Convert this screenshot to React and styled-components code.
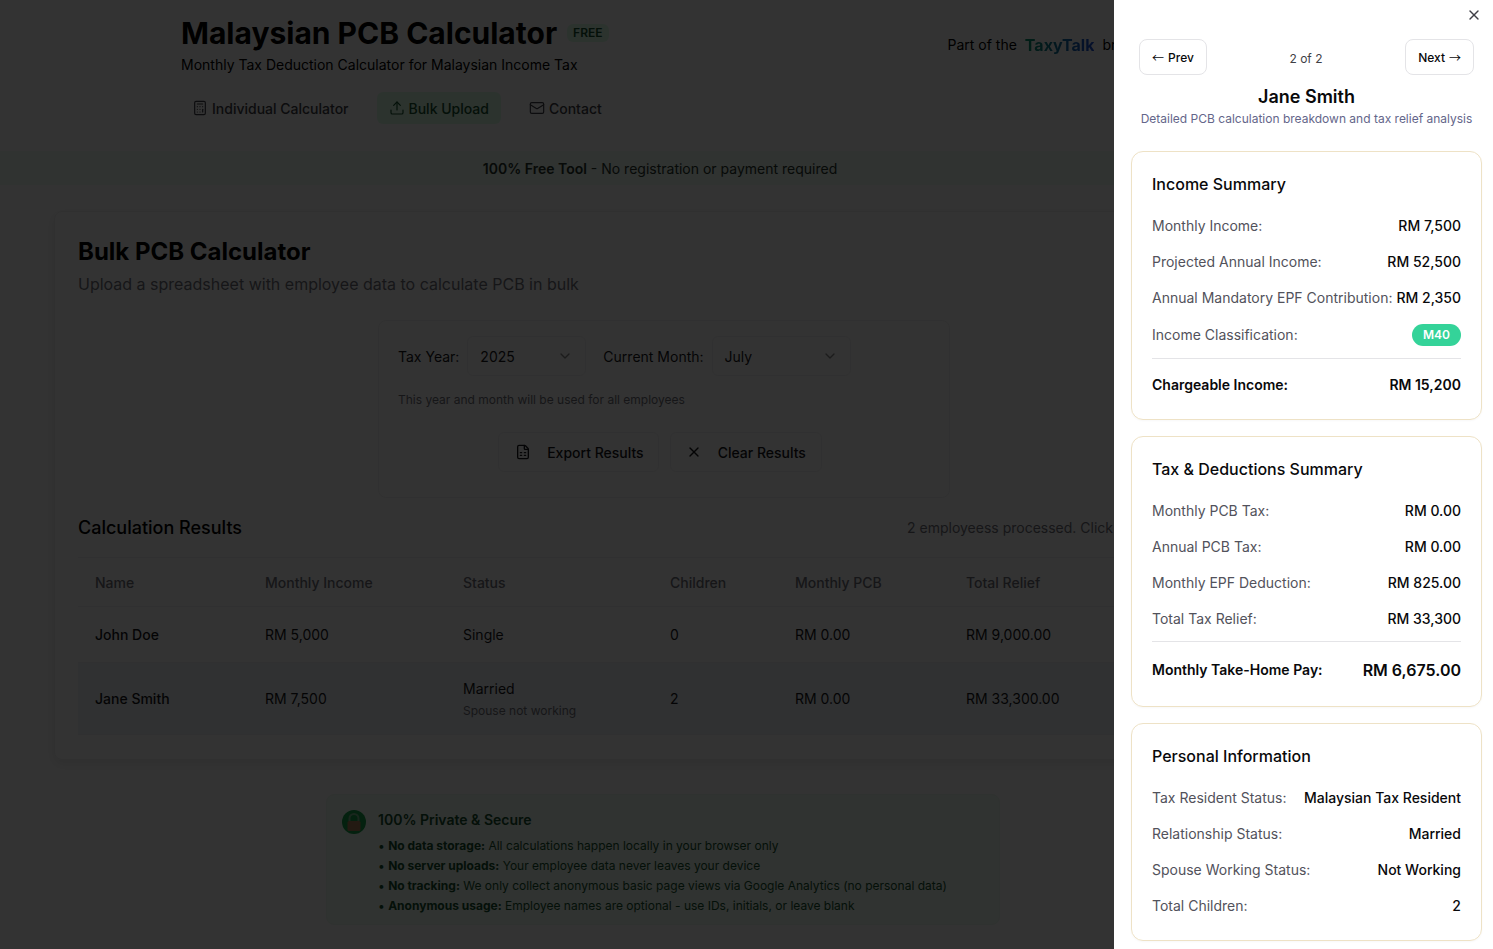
import React from "react";
import styled, { createGlobalStyle } from "styled-components";
import { Calculator, Upload, Mail, ChevronDown, FileSpreadsheet, X } from "lucide-react";

const Global = createGlobalStyle`
  html, body { margin: 0; padding: 0; height: 100%; background: #fff; overflow: hidden; }
  body { font-family: Inter, "Liberation Sans", sans-serif; color: #09090b; }
  * { box-sizing: border-box; }
`;

const Page = styled.div`
  width: 1320px;
  height: 949px;
  overflow: hidden;
  background: #fff;
`;
const Header = styled.header`
  width: 958px;
  margin: 0 auto;
  padding-top: 15px;
`;
const HeaderTop = styled.div`
  display: flex;
  justify-content: space-between;
  align-items: flex-start;
`;
const TitleRow = styled.div`
  display: flex;
  align-items: center;
  gap: 10px;
`;
const Title = styled.h1`
  margin: 0;
  font-size: 30px;
  line-height: 36px;
  font-weight: 700;
  color: #000;
`;
const FreeBadge = styled.span`
  padding: 1px 6px;
  border-radius: 6px;
  font-size: 12px;
  line-height: 16px;
  font-weight: 600;
  color: #14532d;
  background: #dcfce7;
`;
const Subtitle = styled.p`
  margin: 4px 0 0;
  font-size: 14px;
  line-height: 20px;
  color: #000;
`;
const Brand = styled.div`
  display: flex;
  align-items: center;
  gap: 8px;
  margin: 18px -2px 0 0;
  font-size: 14px;
  line-height: 24px;
  color: #000;
`;
const BrandName = styled.span`
  font-size: 16px;
  font-weight: 700;
  background: linear-gradient(90deg, #059669, #1d4ed8);
  -webkit-background-clip: text;
  background-clip: text;
  color: transparent;
`;
const Nav = styled.nav`
  display: flex;
  gap: 16px;
  margin: 17px 0 0 -1px;
`;
const NavItem = styled.div`
  display: flex;
  align-items: center;
  gap: 4px;
  height: 32px;
  padding: 0 12px;
  border-radius: 6px;
  font-size: 14px;
  font-weight: 500;
  color: ${(p) => (p.$active ? "#14532d" : "#3f3f46")};
  background: ${(p) => (p.$active ? "#dcfce7" : "transparent")};
`;
const Banner = styled.div`
  margin-top: 27px;
  height: 34px;
  display: flex;
  align-items: center;
  justify-content: center;
  background: #eefcf2;
  font-size: 14px;
  color: #27352c;
  & > b { font-weight: 600; margin-right: 4px; }
`;
const Main = styled.main`
  padding: 26px 54px 0;
`;
const Card = styled.section`
  height: 549px;
  border: 1px solid #eeeef0;
  border-radius: 8px;
  box-shadow: 0 4px 12px rgba(0, 0, 0, 0.1);
  padding: 24px 23px;
`;
const CardTitle = styled.h2`
  margin: 0;
  font-size: 24px;
  line-height: 32px;
  font-weight: 700;
  color: #000;
`;
const CardSub = styled.p`
  margin: 4px 0 24px;
  font-size: 16px;
  line-height: 24px;
  color: #71717a;
`;
const UploadBox = styled.div`
  width: 572px;
  height: 178px;
  margin-left: 300px;
  border: 1px solid #f1f1f3;
  border-radius: 8px;
  padding: 15px 19px 0;
`;
const SelectRow = styled.div`
  display: flex;
  align-items: center;
  gap: 8px;
`;
const FieldLabel = styled.span`
  font-size: 14px;
  color: #18181b;
  margin-left: ${(p) => p.$offset || 0}px;
`;
const SelectBox = styled.div`
  width: ${(p) => p.$w}px;
  height: 40px;
  display: flex;
  align-items: center;
  justify-content: space-between;
  padding: 0 12px;
  border: 1px solid #f1f1f3;
  border-radius: 6px;
  font-size: 14px;
  color: #18181b;
  & svg { opacity: 0.5; }
`;
const Helper = styled.p`
  margin: 16px 0 0;
  font-size: 12px;
  line-height: 16px;
  color: #71717a;
`;
const Actions = styled.div`
  display: flex;
  justify-content: center;
  gap: 11px;
  margin: 24px 8px 0 0;
`;
const OutlineButton = styled.div`
  display: flex;
  align-items: center;
  gap: 16px;
  height: 40px;
  padding: ${(p) => (p.$wide ? "0 14px 0 16px" : "0 15px")};
  border: 1px solid #f1f1f3;
  border-radius: 6px;
  font-size: 14px;
  font-weight: 500;
  color: #18181b;
`;
const ResultsHead = styled.div`
  display: flex;
  justify-content: space-between;
  align-items: center;
  margin-top: 16px;
  padding-right: 129px;
`;
const ResultsTitle = styled.h3`
  margin: 0;
  font-size: 18px;
  line-height: 28px;
  font-weight: 500;
  color: #000;
`;
const ResultsNote = styled.span`
  margin-bottom: 2px;
  font-size: 14px;
  color: #71717a;
`;
const Table = styled.table`
  width: 1164px;
  margin-top: 15px;
  border-collapse: collapse;
  table-layout: fixed;
  font-size: 14px;
  border-top: 1px solid #f1f1f3;
`;
const Th = styled.th`
  width: ${(p) => p.$w}px;
  height: 49px;
  padding: 0 16px 0 17px;
  text-align: left;
  font-weight: 500;
  color: #71717a;
  border-bottom: 1px solid #f1f1f3;
`;
const Tr = styled.tr`
  background: ${(p) => (p.$selected ? "#f0f4f8" : "transparent")};
  border-bottom: 1px solid #f1f1f3;
`;
const Td = styled.td`
  height: ${(p) => (p.$tall ? 72 : 56)}px;
  padding: ${(p) => (p.$note ? "2px" : "0")} 16px 0 17px;
  font-weight: ${(p) => (p.$strong ? 500 : 400)};
  color: #18181b;
`;
const SpouseNote = styled.div`
  margin-top: 6px;
  font-size: 12px;
  line-height: 16px;
  color: #71717a;
`;
const Private = styled.aside`
  display: flex;
  gap: 12px;
  width: 674px;
  margin: 34px 0 0 272px;
  padding: 15px 15px 8px;
  background: #f0fcf3;
  border: 1px solid #ebfaee;
  border-radius: 8px;
`;
const PrivateTitle = styled.h4`
  margin: 0 0 6px;
  font-size: 14px;
  line-height: 20px;
  font-weight: 600;
  color: #14532d;
`;
const PrivateList = styled.ul`
  margin: 0;
  padding: 0;
  list-style: none;
  font-size: 12px;
  line-height: 20px;
  color: #14532d;
  & b { font-weight: 700; }
`;
const LockIcon = styled.svg`
  flex: none;
  width: 24px;
  height: 24px;
`;
const Overlay = styled.div`
  position: fixed;
  inset: 0;
  background: rgba(0, 0, 0, 0.8);
  backdrop-filter: blur(0.7px);
`;
const Drawer = styled.div`
  position: fixed;
  top: 0;
  right: 0;
  bottom: 0;
  width: 379px;
  padding: 39px 11px 0 17px;
  background: #fff;
  overflow: hidden;
`;
const CloseButton = styled.div`
  position: absolute;
  top: 7px;
  right: 11px;
  display: flex;
  color: #3f3f46;
`;
const Pager = styled.div`
  display: flex;
  justify-content: space-between;
  align-items: flex-start;
  padding: 0 8px;
`;
const PagerButton = styled.div`
  height: 36px;
  display: flex;
  align-items: center;
  gap: 4px;
  padding: 0 12px;
  border: 1px solid #e4e4e7;
  border-radius: 8px;
  font-size: 12px;
  font-weight: 500;
  color: #09090b;
`;
const Arrow = styled.span`
  font-family: "Noto Sans CJK JP", "Liberation Sans", sans-serif;
  font-weight: 400;
`;
const PagerCount = styled.span`
  margin-top: 12px;
  font-size: 12px;
  line-height: 16px;
  color: #3f3f46;
`;
const DrawerName = styled.h2`
  margin: 8px 0 0;
  text-align: center;
  font-size: 18px;
  line-height: 28px;
  font-weight: 600;
  color: #09090b;
`;
const DrawerSub = styled.p`
  margin: 0 0 24px;
  text-align: center;
  font-size: 12px;
  line-height: 16px;
  color: #64668a;
`;
const InfoCard = styled.div`
  margin-bottom: 16px;
  padding: 20px 20px 24px;
  border: 1px solid #eee2c6;
  border-radius: 12px;
  box-shadow: 0 1px 2px rgba(0, 0, 0, 0.03);
`;
const InfoTitle = styled.h3`
  margin: 0 0 20px;
  font-size: 16px;
  line-height: 24px;
  font-weight: 500;
  color: #09090b;
`;
const InfoRow = styled.div`
  display: flex;
  justify-content: space-between;
  align-items: center;
  font-size: 14px;
  line-height: 20px;
  & + & { margin-top: 16px; }
`;
const InfoLabel = styled.span`
  color: #52525b;
`;
const InfoValue = styled.span`
  font-weight: 500;
  color: #09090b;
`;
const TotalRow = styled.div`
  display: flex;
  justify-content: space-between;
  align-items: center;
  margin-top: 12px;
  padding-top: 16px;
  border-top: 1px solid #e4e4e7;
  font-size: 14px;
  line-height: 20px;
  font-weight: 600;
  color: #09090b;
`;
const BigValue = styled.span`
  font-size: 16px;
  line-height: 24px;
  font-weight: 600;
`;
const ClassBadge = styled.span`
  height: 22px;
  padding: 0 11px;
  display: flex;
  align-items: center;
  border-radius: 11px;
  background: #34d399;
  color: #fff;
  font-size: 12px;
  font-weight: 600;
`;

const Row = ({ label, value }) => (
  <InfoRow>
    <InfoLabel>{label}</InfoLabel>
    <InfoValue>{value}</InfoValue>
  </InfoRow>
);

export default function App() {
  return (
    <>
      <Global />
      <Page>
        <Header>
          <HeaderTop>
            <div>
              <TitleRow>
                <Title>Malaysian PCB Calculator</Title>
                <FreeBadge>FREE</FreeBadge>
              </TitleRow>
              <Subtitle>Monthly Tax Deduction Calculator for Malaysian Income Tax</Subtitle>
            </div>
            <Brand>
              <span>Part of the</span>
              <BrandName>TaxyTalk</BrandName>
              <span>brand</span>
            </Brand>
          </HeaderTop>
          <Nav>
            <NavItem><Calculator size={16} strokeWidth={1.75} />Individual Calculator</NavItem>
            <NavItem $active><Upload size={16} strokeWidth={1.75} />Bulk Upload</NavItem>
            <NavItem><Mail size={16} strokeWidth={1.75} />Contact</NavItem>
          </Nav>
        </Header>
        <Banner><b>100% Free Tool</b> - No registration or payment required</Banner>
        <Main>
          <Card>
            <CardTitle>Bulk PCB Calculator</CardTitle>
            <CardSub>Upload a spreadsheet with employee data to calculate PCB in bulk</CardSub>
            <UploadBox>
              <SelectRow>
                <FieldLabel>Tax Year:</FieldLabel>
                <SelectBox $w={119}>2025<ChevronDown size={16} /></SelectBox>
                <FieldLabel $offset={9}>Current Month:</FieldLabel>
                <SelectBox $w={139}>July<ChevronDown size={16} /></SelectBox>
              </SelectRow>
              <Helper>This year and month will be used for all employees</Helper>
              <Actions>
                <OutlineButton $wide><FileSpreadsheet size={16} />Export Results</OutlineButton>
                <OutlineButton><X size={16} />Clear Results</OutlineButton>
              </Actions>
            </UploadBox>
            <ResultsHead>
              <ResultsTitle>Calculation Results</ResultsTitle>
              <ResultsNote>2 employeess processed. Click</ResultsNote>
            </ResultsHead>
            <Table>
              <thead>
                <tr>
                  <Th $w={170}>Name</Th>
                  <Th $w={198}>Monthly Income</Th>
                  <Th $w={207}>Status</Th>
                  <Th $w={125}>Children</Th>
                  <Th $w={171}>Monthly PCB</Th>
                  <Th $w={293}>Total Relief</Th>
                </tr>
              </thead>
              <tbody>
                <Tr>
                  <Td $strong>John Doe</Td>
                  <Td>RM 5,000</Td>
                  <Td>Single</Td>
                  <Td>0</Td>
                  <Td>RM 0.00</Td>
                  <Td>RM 9,000.00</Td>
                </Tr>
                <Tr $selected>
                  <Td $strong $tall>Jane Smith</Td>
                  <Td $tall>RM 7,500</Td>
                  <Td $tall $note>Married<SpouseNote>Spouse not working</SpouseNote></Td>
                  <Td $tall>2</Td>
                  <Td $tall>RM 0.00</Td>
                  <Td $tall>RM 33,300.00</Td>
                </Tr>
              </tbody>
            </Table>
          </Card>
          <Private>
            <LockIcon viewBox="0 0 24 24">
              <circle cx="12" cy="12" r="12" fill="#16a34a" />
              <path d="M7.5 11V8.5a4.5 4.5 0 0 1 9 0V11" fill="none" stroke="#7fbf8f" strokeWidth="2" />
              <rect x="5.5" y="11" width="13" height="10" rx="1.5" fill="#b0825a" />
            </LockIcon>
            <div>
              <PrivateTitle>100% Private &amp; Secure</PrivateTitle>
              <PrivateList>
                <li>• <b>No data storage:</b> All calculations happen locally in your browser only</li>
                <li>• <b>No server uploads:</b> Your employee data never leaves your device</li>
                <li>• <b>No tracking:</b> We only collect anonymous basic page views via Google Analytics (no personal data)</li>
                <li>• <b>Anonymous usage:</b> Employee names are optional - use IDs, initials, or leave blank</li>
              </PrivateList>
            </div>
          </Private>
        </Main>
      </Page>
      <Overlay />
      <Drawer>
        <CloseButton><X size={16} /></CloseButton>
        <Pager>
          <PagerButton><Arrow>←</Arrow>Prev</PagerButton>
          <PagerCount>2 of 2</PagerCount>
          <PagerButton>Next<Arrow>→</Arrow></PagerButton>
        </Pager>
        <DrawerName>Jane Smith</DrawerName>
        <DrawerSub>Detailed PCB calculation breakdown and tax relief analysis</DrawerSub>
        <InfoCard>
          <InfoTitle>Income Summary</InfoTitle>
          <Row label="Monthly Income:" value="RM 7,500" />
          <Row label="Projected Annual Income:" value="RM 52,500" />
          <Row label="Annual Mandatory EPF Contribution:" value="RM 2,350" />
          <InfoRow>
            <InfoLabel>Income Classification:</InfoLabel>
            <ClassBadge>M40</ClassBadge>
          </InfoRow>
          <TotalRow><span>Chargeable Income:</span><span>RM 15,200</span></TotalRow>
        </InfoCard>
        <InfoCard>
          <InfoTitle>Tax &amp; Deductions Summary</InfoTitle>
          <Row label="Monthly PCB Tax:" value="RM 0.00" />
          <Row label="Annual PCB Tax:" value="RM 0.00" />
          <Row label="Monthly EPF Deduction:" value="RM 825.00" />
          <Row label="Total Tax Relief:" value="RM 33,300" />
          <TotalRow><span>Monthly Take-Home Pay:</span><BigValue>RM 6,675.00</BigValue></TotalRow>
        </InfoCard>
        <InfoCard>
          <InfoTitle>Personal Information</InfoTitle>
          <Row label="Tax Resident Status:" value="Malaysian Tax Resident" />
          <Row label="Relationship Status:" value="Married" />
          <Row label="Spouse Working Status:" value="Not Working" />
          <Row label="Total Children:" value="2" />
        </InfoCard>
      </Drawer>
    </>
  );
}
